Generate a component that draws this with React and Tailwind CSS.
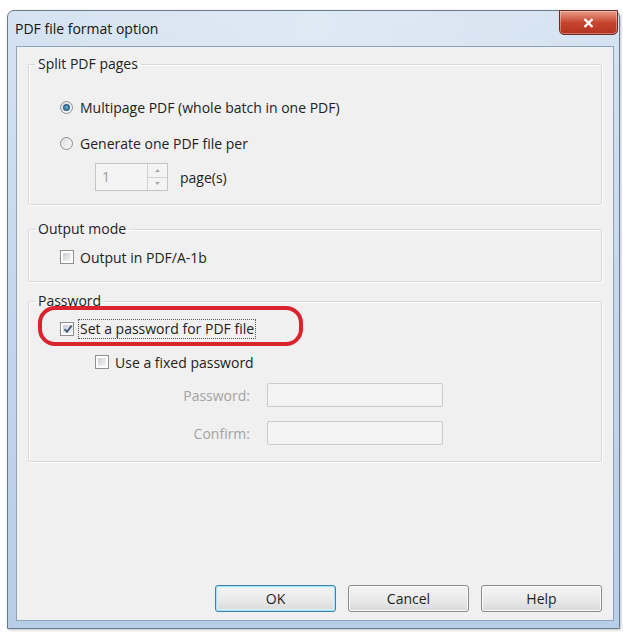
import React from "react";

const Radio = ({ checked }) => (
  <span className="w-[13px] h-[13px] rounded-full border border-[#8e8f8f] bg-linear-to-br from-[#dcdcdc] to-[#fbfbfb] flex items-center justify-center shrink-0">
    {checked && (
      <span className="w-[7px] h-[7px] rounded-full bg-radial from-[#7fb6d8] via-[#2f6d95] to-[#1b4560]" />
    )}
  </span>
);

const Checkbox = ({ checked }) => (
  <span className="w-[14px] h-[14px] border border-[#8e8f8f] bg-white p-[2px] shrink-0 flex">
    <span className="flex-1 bg-linear-to-br from-[#cbcfd5] to-[#f6f6f6] flex items-center justify-center">
      {checked && (
        <svg width="10" height="10" viewBox="0 0 10 10">
          <path d="M1.5 5.2 L4 7.8 L8.6 1.6" fill="none" stroke="#3c5a86" strokeWidth="1.8" />
        </svg>
      )}
    </span>
  </span>
);

const Group = ({ title, className, children }) => (
  <fieldset className={`border border-[#d3dadf] rounded-[2px] shadow-[1px_1px_0_#ffffff,inset_1px_1px_0_#ffffff] ${className}`}>
    <legend className="ml-[6px] px-[3px] leading-[20px] text-[#222]">{title}</legend>
    {children}
  </fieldset>
);

const Button = ({ label, primary }) => (
  <button
    className={`w-[121px] h-[27px] rounded-[3px] border bg-linear-to-b from-[#f4f4f4] via-[#ebebeb] to-[#d9d9d9] text-[#1e1e1e] leading-[20px] ${
      primary
        ? "border-[#3c7fb1] shadow-[inset_0_0_0_1px_#a8e4f6,inset_0_0_0_2px_#d6f2fb]"
        : "border-[#8a8a8a] shadow-[inset_0_0_0_1px_#fbfbfb]"
    }`}
  >
    {label}
  </button>
);

export default function App() {
  return (
    <div className="w-[623px] h-[632px] bg-white pl-[7px] pt-[10px] font-['Open_Sans',sans-serif] text-[14px] text-[#222]">
      <div className="w-[613px] h-[619px] rounded-t-[7px] border border-[#6a7a8c] bg-linear-to-b from-[#d6e3f1] via-[#c3d6eb] to-[#b7cee7] flex flex-col shadow-[1px_1px_3px_rgba(0,0,0,0.25)]">
        {/* title bar */}
        <div className="h-[35px] flex items-start justify-between pl-[7px] bg-linear-to-r from-transparent via-[#e6eef7]/60 to-transparent">
          <span className="mt-[8px] leading-[20px] text-[#141414]">PDF file format option</span>
          <div className="-mt-[1px] mr-[1px] w-[59px] h-[25px] rounded-b-[5px] border border-[#6b2b23] bg-linear-to-b from-[#e49b88] via-[#c8452f] to-[#b2311f] flex items-center justify-center shadow-[inset_0_0_0_1px_rgba(255,255,255,0.35)]">
            <svg width="11" height="10" viewBox="0 0 11 10">
              <path d="M1.5 1 L9.5 9 M9.5 1 L1.5 9" stroke="#ffffff" strokeWidth="2.4" />
            </svg>
          </div>
        </div>

        {/* client area */}
        <div className="ml-[8px] mr-[5px] mb-[7px] flex-1 border border-[#8ea2ba] bg-[#f0f0f0] flex flex-col px-[11px] pt-[7px] pb-[8px]">
          {/* split */}
          <Group title="Split PDF pages" className="pb-[13px]">
            <div className="pl-[31px] flex flex-col">
              <div className="mt-[23px] h-[20px] flex items-center gap-[7px]">
                <Radio checked />
                <span>Multipage PDF (whole batch in one PDF)</span>
              </div>
              <div className="mt-[16px] h-[20px] flex items-center gap-[7px]">
                <Radio />
                <span>Generate one PDF file per</span>
              </div>
              <div className="mt-[10px] flex items-center">
                <div className="ml-[35px] w-[73px] h-[28px] border border-[#c5c5c5] bg-[#f4f4f4] flex">
                  <span className="flex-1 pl-[6px] leading-[26px] text-[#9a9a9a]">1</span>
                  <div className="w-[20px] border-l border-[#d2d2d2] flex flex-col">
                    <div className="flex-1 border-b border-[#d2d2d2] flex items-center justify-center">
                      <svg width="5" height="3" viewBox="0 0 5 3"><path d="M0 3 L2.5 0 L5 3 Z" fill="#a8a8a8" /></svg>
                    </div>
                    <div className="flex-1 flex items-center justify-center">
                      <svg width="5" height="3" viewBox="0 0 5 3"><path d="M0 0 L2.5 3 L5 0 Z" fill="#a8a8a8" /></svg>
                    </div>
                  </div>
                </div>
                <span className="ml-[12px]">page(s)</span>
              </div>
            </div>
          </Group>

          {/* output mode */}
          <Group title="Output mode" className="mt-[14px] pb-[14px]">
            <div className="pl-[31px] mt-[8px] h-[20px] flex items-center gap-[6px]">
              <Checkbox />
              <span>Output in PDF/A-1b</span>
            </div>
          </Group>

          {/* password */}
          <Group title="Password" className="mt-[9px] pb-[16px]">
            <div className="pl-[31px] flex flex-col">
              <div className="relative mt-[8px] h-[20px] flex items-center gap-[4px]">
                <Checkbox checked />
                <span className="px-[1px] leading-[18px] border border-dotted border-[#555]">Set a password for PDF file</span>
                <div className="absolute -left-[22px] -top-[13px] w-[265px] h-[40px] rounded-[17px] border-[4px] border-[#d9232e]" />
              </div>
              <div className="mt-[13px] ml-[35px] h-[20px] flex items-center gap-[6px]">
                <Checkbox />
                <span>Use a fixed password</span>
              </div>
              <div className="mt-[11px] flex items-center">
                <span className="w-[190px] text-right text-[#a3a3a3]">Password:</span>
                <div className="ml-[17px] w-[176px] h-[24px] border border-[#cbcbcb] rounded-[2px] bg-[#f3f3f3]" />
              </div>
              <div className="mt-[14px] flex items-center">
                <span className="w-[190px] text-right text-[#a3a3a3]">Confirm:</span>
                <div className="ml-[17px] w-[176px] h-[24px] border border-[#cbcbcb] rounded-[2px] bg-[#f3f3f3]" />
              </div>
            </div>
          </Group>

          {/* buttons */}
          <div className="mt-auto flex justify-end gap-[12px]">
            <Button label="OK" primary />
            <Button label="Cancel" />
            <Button label="Help" />
          </div>
        </div>
      </div>
    </div>
  );
}
